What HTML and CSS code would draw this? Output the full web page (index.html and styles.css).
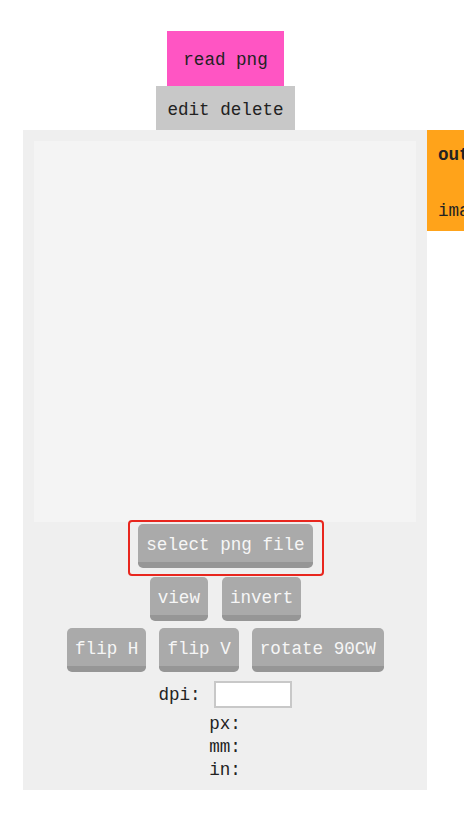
FILE: index.html
```html
<!DOCTYPE html>
<html>
<head>
<meta charset="utf-8">
<link rel="stylesheet" href="styles.css">
</head>
<body>
<div class="app">
  <div class="tabs">
    <div class="tab tab-read">read png</div>
    <div class="tab tab-edit">edit delete</div>
  </div>
  <div class="row">
    <div class="panel">
      <div class="canvas"></div>
      <div class="btn-row first">
        <div class="focus-wrap"><button class="btn">select png file</button></div>
      </div>
      <div class="btn-row second">
        <button class="btn">view</button>
        <button class="btn">invert</button>
      </div>
      <div class="btn-row third">
        <button class="btn">flip H</button>
        <button class="btn">flip V</button>
        <button class="btn">rotate 90CW</button>
      </div>
      <div class="dpi-row">
        <span class="label">dpi:</span>
        <input class="dpi-input" type="text">
      </div>
      <div class="info">
        <div class="line">px:</div>
        <div class="line">mm:</div>
        <div class="line">in:</div>
      </div>
    </div>
    <div class="side">
      <div class="side-title">output</div>
      <div class="side-text">image</div>
    </div>
  </div>
</div>
</body>
</html>
```

FILE: styles.css
```css
html, body {
  margin: 0;
  padding: 0;
  overflow: hidden;
  background: #ffffff;
}

body {
  font-family: "Liberation Mono", "DejaVu Sans Mono", monospace;
  font-size: 17.6px;
  color: #222222;
}

.app {
  padding: 31px 0 0 23px;
  width: 800px;
}

.tabs {
  width: 404px;
  display: flex;
  flex-direction: column;
  align-items: center;
}

.tab {
  display: flex;
  align-items: center;
  justify-content: center;
  color: #222222;
  box-sizing: border-box;
  padding-top: 3px;
}

.tab-read {
  width: 117px;
  height: 55px;
  background: #ff55c3;
  margin-left: 1px;
}

.tab-edit {
  width: 139px;
  height: 44px;
  background: #c8c8c8;
  margin-left: 1px;
}

.row {
  display: flex;
  align-items: flex-start;
}

.panel {
  width: 404px;
  height: 660px;
  box-sizing: border-box;
  background: #efefef;
  padding: 11px 11px 0 11px;
  display: flex;
  flex-direction: column;
  align-items: center;
}

.canvas {
  width: 382px;
  height: 381px;
  background: #f4f4f4;
  flex: none;
}

.btn-row {
  display: flex;
  justify-content: center;
  gap: 13px;
  margin-left: 1px;
}

.btn-row.first { margin-top: 2px; }
.btn-row.second { margin-top: 9px; gap: 14px; }
.btn-row.third { margin-top: 7px; }

.focus-wrap {
  position: relative;
  display: flex;
}

.focus-wrap::after {
  content: "";
  position: absolute;
  left: -10px;
  right: -11px;
  top: -4px;
  bottom: -8px;
  border: 2px solid #e8261e;
  border-radius: 4px;
  pointer-events: none;
}

.btn {
  font-family: "Liberation Mono", "DejaVu Sans Mono", monospace;
  font-size: 17.6px;
  color: #f6f6f6;
  background: #aaaaaa;
  border: none;
  border-bottom: 6px solid #969696;
  border-radius: 5px;
  height: 44px;
  box-sizing: border-box;
  padding: 4px 8px 0 8px;
  margin: 0;
  line-height: 34px;
  display: flex;
  align-items: center;
}

.dpi-row {
  margin-top: 9px;
  display: flex;
  align-items: center;
  gap: 13px;
  margin-left: 0;
}

.dpi-input {
  width: 78px;
  height: 27px;
  box-sizing: border-box;
  border: 2px solid #c8c8c8;
  background: #ffffff;
  padding: 0;
  margin: 0;
}

.info {
  margin-top: 5px;
  display: flex;
  flex-direction: column;
  align-items: center;
  margin-left: 0;
}

.line {
  height: 23px;
  line-height: 23px;
}

.side {
  width: 200px;
  height: 101px;
  box-sizing: border-box;
  background: #ffa31a;
  padding: 14px 11px 0 11px;
  flex: none;
}

.side-title {
  font-weight: bold;
  height: 22px;
  line-height: 22px;
}

.side-text {
  margin-top: 34px;
  line-height: 22px;
}
```
